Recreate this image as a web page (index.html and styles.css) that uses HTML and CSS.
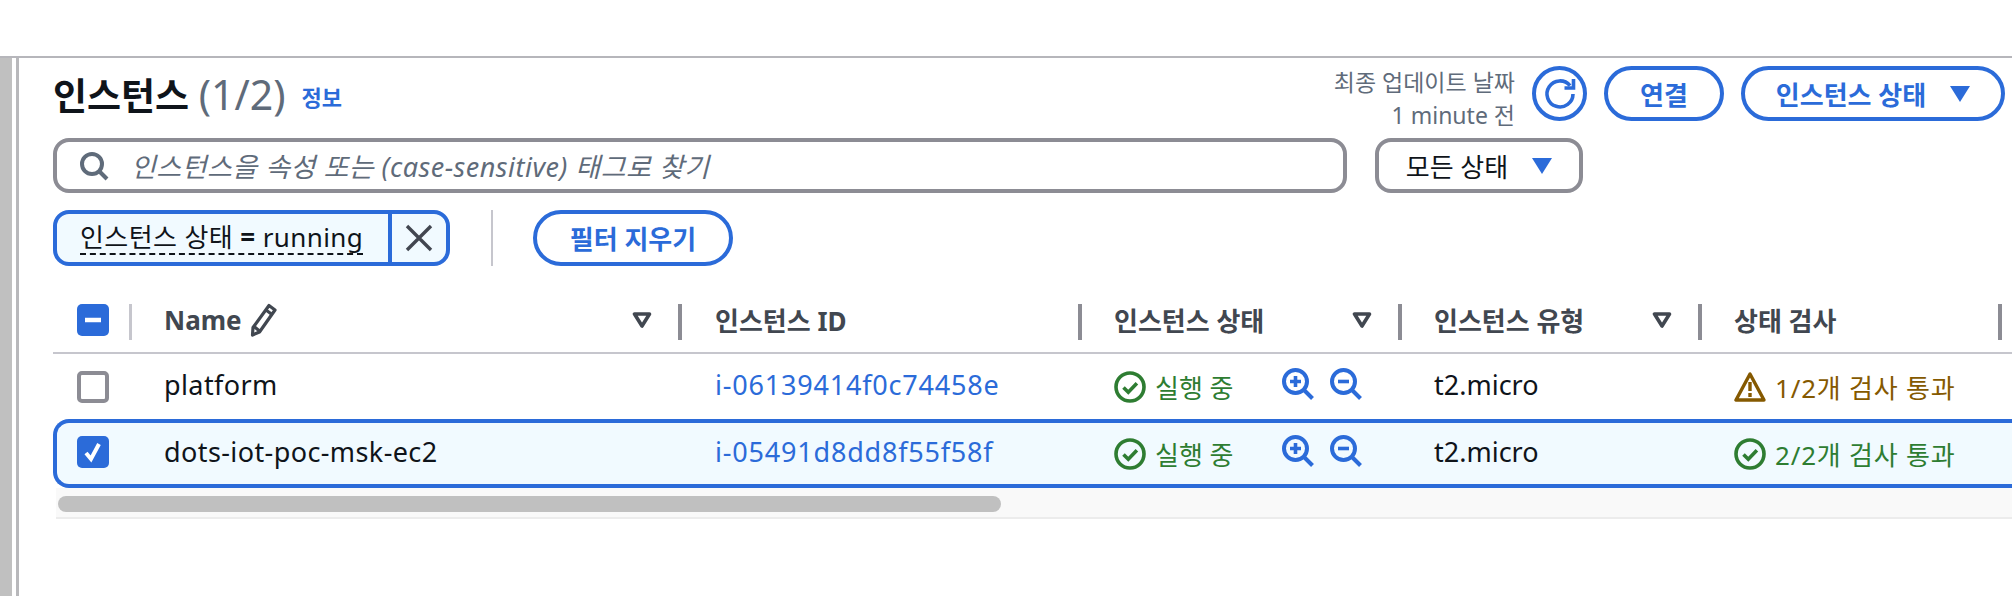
FILE: index.html
```html
<!DOCTYPE html>
<html lang="ko">
<head>
    <meta charset="UTF-8">
    <meta name="viewport" content="width=device-width, initial-scale=1.0">
    <title>인스턴스</title>
    <link rel="stylesheet" href="styles.css">
</head>
<body>
    <svg class="icon-defs" aria-hidden="true">
        <symbol id="i-ok" viewBox="0 0 32 32">
            <circle cx="16" cy="16" r="14" fill="none" stroke="currentColor" stroke-width="3.6"/>
            <path d="M9.5 16.5l4.8 4.8 8.6-9" fill="none" stroke="currentColor" stroke-width="3.6"/>
        </symbol>
        <symbol id="i-zoom-in" viewBox="0 0 32 32">
            <circle cx="13.5" cy="13.5" r="11.5" fill="none" stroke="currentColor" stroke-width="4"/>
            <path d="M22 22l8.5 8.5" fill="none" stroke="currentColor" stroke-width="4"/>
            <path d="M8 13.5h11M13.5 8v11" fill="none" stroke="currentColor" stroke-width="3.6"/>
        </symbol>
        <symbol id="i-zoom-out" viewBox="0 0 32 32">
            <circle cx="13.5" cy="13.5" r="11.5" fill="none" stroke="currentColor" stroke-width="4"/>
            <path d="M22 22l8.5 8.5" fill="none" stroke="currentColor" stroke-width="4"/>
            <path d="M8 13.5h11" fill="none" stroke="currentColor" stroke-width="3.6"/>
        </symbol>
        <symbol id="i-sort" viewBox="0 0 20 16">
            <path d="M2.5 2h15L10 14z" fill="none" stroke="currentColor" stroke-width="3.6" stroke-linejoin="round"/>
        </symbol>
        <symbol id="i-caret" viewBox="0 0 20 16">
            <path d="M0 0h20L10 16z" fill="currentColor"/>
        </symbol>
    </svg>

    <div class="shell">
        <div class="strip"></div>
        <main class="panel">
            <div class="top-row">
                <div class="title-wrap">
                    <h1 class="title">인스턴스 <span class="count">(1/2)</span></h1>
                    <a class="info" href="#">정보</a>
                </div>
                <div class="actions">
                    <div class="updated">최종 업데이트 날짜<br>1 minute 전</div>
                    <button class="btn btn-round" type="button" aria-label="새로 고침">
                        <svg width="34" height="34" viewBox="0 0 34 34" fill="none" stroke="currentColor" stroke-width="3.6">
                            <path d="M21.5 11h9V2"/>
                            <path d="M30 17a13 13 0 1 1-3-8.4"/>
                        </svg>
                    </button>
                    <button class="btn btn-connect" type="button">연결</button>
                    <button class="btn btn-state" type="button">인스턴스 상태
                        <svg class="caret" width="20" height="16"><use href="#i-caret"/></svg>
                    </button>
                </div>
            </div>

            <div class="search-row">
                <div class="search">
                    <svg width="30" height="30" viewBox="0 0 30 30" fill="none" stroke="currentColor" stroke-width="4">
                        <circle cx="13" cy="13" r="10"/>
                        <path d="M20 20l8 8"/>
                    </svg>
                    <span class="placeholder">인스턴스을 속성 또는 (case-sensitive) 태그로 찾기</span>
                </div>
                <button class="select" type="button">모든 상태
                    <svg class="caret" width="20" height="16"><use href="#i-caret"/></svg>
                </button>
            </div>

            <div class="filter-row">
                <div class="chip">
                    <span class="chip-label"><span class="chip-text">인스턴스 상태 <b>=</b> running</span></span>
                    <span class="chip-close">
                        <svg width="28" height="28" viewBox="0 0 28 28" fill="none" stroke="currentColor" stroke-width="3.4"><path d="M2 2l24 24M26 2L2 26"/></svg>
                    </span>
                </div>
                <div class="filter-sep"></div>
                <button class="btn btn-clear" type="button">필터 지우기</button>
            </div>

            <div class="table">
                <div class="row row-head">
                    <div class="cell cell-sel">
                        <span class="check check-on">
                            <svg width="20" height="6" viewBox="0 0 20 6"><path d="M2 3h16" stroke="#fff" stroke-width="4.5"/></svg>
                        </span>
                        <span class="rule rule-light"></span>
                    </div>
                    <div class="cell cell-name">
                        Name
                        <svg class="pencil" width="28" height="36" viewBox="0 0 28 36" fill="none" stroke="currentColor" stroke-width="3.2" stroke-linejoin="round">
                            <path d="M19 3.5l6 4.5L9.5 30 2.5 33l.5-7.5z"/>
                            <path d="M4 24.5l5.5 4.5M16 8l6 4.5"/>
                        </svg>
                        <svg class="sort" width="20" height="16"><use href="#i-sort"/></svg>
                        <span class="rule"></span>
                    </div>
                    <div class="cell cell-id">인스턴스 ID<span class="rule rule-push"></span></div>
                    <div class="cell">
                        인스턴스 상태
                        <svg class="sort" width="20" height="16"><use href="#i-sort"/></svg>
                        <span class="rule"></span>
                    </div>
                    <div class="cell">
                        인스턴스 유형
                        <svg class="sort" width="20" height="16"><use href="#i-sort"/></svg>
                        <span class="rule"></span>
                    </div>
                    <div class="cell">상태 검사<span class="rule rule-push"></span></div>
                </div>

                <div class="row">
                    <div class="cell cell-sel"><span class="check"></span></div>
                    <div class="cell cell-name"><span class="latin name-text">platform</span></div>
                    <div class="cell cell-id"><a class="latin id-text" href="#">i-06139414f0c74458e</a></div>
                    <div class="cell cell-state">
                        <span class="status ok"><svg width="32" height="32"><use href="#i-ok"/></svg>실행 중</span>
                        <span class="zooms">
                            <svg width="32" height="32"><use href="#i-zoom-in"/></svg>
                            <svg width="32" height="32"><use href="#i-zoom-out"/></svg>
                        </span>
                    </div>
                    <div class="cell"><span class="latin">t2.micro</span></div>
                    <div class="cell">
                        <span class="status status-wide warn">
                            <svg width="32" height="32" viewBox="0 0 32 32" fill="none" stroke="currentColor" stroke-width="3.4" stroke-linejoin="round">
                                <path d="M16 3L2 29h28z"/>
                                <path d="M16 11v9M16 22v4"/>
                            </svg>1/2개 검사 통과</span>
                    </div>
                </div>

                <div class="row row-selected">
                    <div class="cell cell-sel">
                        <span class="check check-on">
                            <svg width="20" height="22" viewBox="0 0 20 22" fill="none"><path d="M3 12l5 6 8-15" stroke="#fff" stroke-width="4"/></svg>
                        </span>
                    </div>
                    <div class="cell cell-name"><span class="latin name-text">dots-iot-poc-msk-ec2</span></div>
                    <div class="cell cell-id"><a class="latin id-text" href="#">i-05491d8dd8f55f58f</a></div>
                    <div class="cell cell-state">
                        <span class="status ok"><svg width="32" height="32"><use href="#i-ok"/></svg>실행 중</span>
                        <span class="zooms">
                            <svg width="32" height="32"><use href="#i-zoom-in"/></svg>
                            <svg width="32" height="32"><use href="#i-zoom-out"/></svg>
                        </span>
                    </div>
                    <div class="cell"><span class="latin">t2.micro</span></div>
                    <div class="cell">
                        <span class="status status-wide ok"><svg width="32" height="32"><use href="#i-ok"/></svg>2/2개 검사 통과</span>
                    </div>
                </div>

                <div class="scrollbar"><div class="scroll-thumb"></div></div>
            </div>
        </main>
    </div>
</body>
</html>
```

FILE: styles.css
```css
* {
    box-sizing: border-box;
}
html, body {
    height: 100%;
    overflow: hidden;
}
body {
    margin: 0;
    padding-top: 56px;
    background-color: #fff;
    color: #0f141a;
    font-family: "Noto Sans", "Noto Sans CJK KR", sans-serif;
    font-size: 26px;
}
.icon-defs {
    display: none;
}
a {
    color: #2b6bd9;
    text-decoration: none;
}
button {
    font-family: inherit;
    cursor: pointer;
}
.shell {
    display: flex;
    height: 540px;
    border-top: 2px solid #b6b6bb;
}
.strip {
    width: 12px;
    margin-right: 4px;
    background-color: #c0c0c0;
}
.panel {
    flex: 1;
    min-width: 0;
    padding-left: 34px;
    border-left: 3px solid #b8b8bb;
}

/* top row */
.top-row {
    display: flex;
    justify-content: space-between;
    padding: 8px 7px 0 0;
    height: 63px;
}
.title-wrap {
    display: flex;
    align-items: center;
    gap: 16px;
    padding-top: 3px;
}
.title {
    margin: 0;
    font-size: 37px;
    line-height: 46px;
    font-weight: 700;
}
.count {
    color: #5f6b7a;
    font-weight: 400;
    font-size: 41px;
}
.info {
    font-size: 22px;
    font-weight: 700;
    padding-top: 1px;
}
.actions {
    display: flex;
    gap: 17px;
}
.updated {
    font-size: 23px;
    line-height: 33px;
    text-align: right;
    color: #5f6b7a;
}
.btn {
    height: 55px;
    padding: 0;
    background-color: #fff;
    border: 4px solid #2b6bd9;
    border-radius: 28px;
    color: #2b6bd9;
    font-size: 26px;
    font-weight: 700;
    display: flex;
    align-items: center;
    justify-content: center;
}
.btn-round {
    width: 55px;
    border-radius: 50%;
}
.btn-connect {
    width: 120px;
}
.btn-state {
    width: 264px;
    gap: 24px;
}
.caret {
    color: #2b6bd9;
    flex: none;
}

/* search */
.search-row {
    display: flex;
    gap: 28px;
    margin-top: 17px;
}
.search {
    width: 1294px;
    height: 55px;
    display: flex;
    align-items: center;
    gap: 22px;
    padding-left: 22px;
    border: 4px solid #8c8c94;
    border-radius: 16px;
    color: #5f6b7a;
}
.placeholder {
    font-size: 27px;
    font-style: italic;
    letter-spacing: 0.5px;
}
.select {
    width: 208px;
    height: 55px;
    display: flex;
    align-items: center;
    justify-content: center;
    gap: 24px;
    background-color: #fff;
    border: 4px solid #8c8c94;
    border-radius: 16px;
    color: #0f141a;
    font-size: 26px;
}

/* filter chip */
.filter-row {
    display: flex;
    align-items: stretch;
    margin-top: 17px;
    height: 56px;
}
.chip {
    width: 397px;
    display: flex;
    background-color: #f1faff;
    border: 4px solid #2b6bd9;
    border-radius: 16px;
}
.chip-label {
    width: 331px;
    padding-left: 23px;
    display: flex;
    align-items: center;
    font-size: 26px;
    letter-spacing: 0.4px;
}
.chip-text {
    line-height: 31px;
    border-bottom: 2px dashed #0f141a;
}
.chip-close {
    flex: 1;
    display: flex;
    align-items: center;
    justify-content: center;
    border-left: 4px solid #2b6bd9;
    color: #424650;
}
.filter-sep {
    width: 2px;
    margin-left: 41px;
    background-color: #c6c6cd;
}
.btn-clear {
    width: 200px;
    height: 56px;
    margin-left: 40px;
}

/* table */
.table {
    margin-top: 38px;
}
.row {
    display: grid;
    grid-template-columns: var(--sel, 79px) 550px 400px 320px 300px 300px 1fr;
    height: 65px;
}
.row-head {
    height: 50px;
    padding-bottom: 14px;
    border-bottom: 2px solid #c6c6cd;
    color: #414750;
    font-weight: 700;
    align-items: start;
}
.row-head .cell {
    height: 36px;
    padding-bottom: 4px;
}
.row-selected {
    --sel: 75px;
    height: 69px;
    background-color: #f1faff;
    border: 4px solid #2b6bd9;
    border-right: none;
    border-radius: 16px 0 0 16px;
}
.row-selected .check {
    margin-left: 20px;
    margin-top: -4px;
}
.cell {
    display: flex;
    align-items: center;
    padding-left: 32px;
    min-width: 0;
    white-space: nowrap;
}
.row-head .cell-sel,
.cell-sel {
    padding-left: 0;
}
.cell-name {
    padding-left: 32px;
}
.cell-id {
    padding-left: 33px;
}
.latin {
    font-size: 27px;
    margin-top: -5px;
}
.name-text {
    letter-spacing: 0.4px;
}
.id-text {
    letter-spacing: 0.8px;
}
.check {
    width: 32px;
    height: 32px;
    margin-left: 24px;
    display: flex;
    align-items: center;
    justify-content: center;
    background-color: #fff;
    border: 4px solid #8c8c94;
    border-radius: 5px;
}
.check-on {
    background-color: #2b6bd9;
    border: none;
}
.rule {
    width: 4px;
    height: 36px;
    margin-left: 26px;
    background-color: #8c8c94;
    flex: none;
    align-self: flex-start;
}
.rule-light {
    width: 3px;
    margin-left: 20px;
    background-color: #c6c6cd;
}
.rule-push {
    margin-left: auto;
}
.pencil {
    margin-left: 8px;
    flex: none;
}
.sort {
    margin-left: auto;
    flex: none;
    color: #414750;
}
.status {
    display: inline-flex;
    align-items: center;
    gap: 9px;
}
.status svg {
    flex: none;
}
.status-wide {
    letter-spacing: 0.8px;
}
.ok {
    color: #2e7d32;
}
.warn {
    color: #855900;
}
.zooms {
    display: flex;
    gap: 16px;
    margin-left: 48px;
    margin-top: -6px;
    color: #2b6bd9;
}

/* horizontal scrollbar */
.scrollbar {
    height: 31px;
    margin-left: 3px;
    padding: 8px 0 0 2px;
    background-color: #f9f9f9;
    border-bottom: 2px solid #ececec;
}
.scroll-thumb {
    width: 943px;
    height: 16px;
    background-color: #c0c0c0;
    border-radius: 8px;
}
```
